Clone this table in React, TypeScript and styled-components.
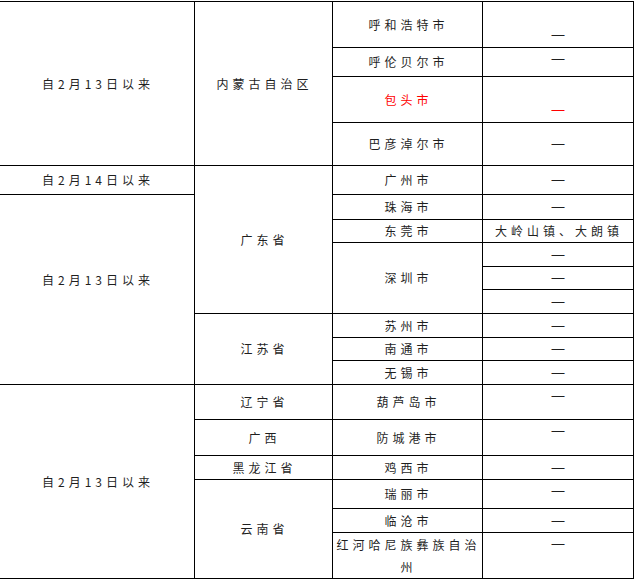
import React from 'react';
import styled, { createGlobalStyle } from 'styled-components';

const GlobalStyle = createGlobalStyle`
	html,
	body {
		margin: 0;
		padding: 0;
		background: #ffffff;
		overflow: hidden;
	}
`;

type CellData = {
	text?: string;
	dash?: boolean;
	lead?: boolean;
	rowSpan?: number;
	top?: boolean;
	red?: boolean;
	padBottom?: number;
};

type RowData = {
	height: number;
	cells: CellData[];
};

const columns = [195, 138, 150, 151];

const rows: RowData[] = [
	{
		height: 46,
		cells: [
			{ text: '自2月13日以来', rowSpan: 4 },
			{ text: '内蒙古自治区', rowSpan: 4 },
			{ text: '呼和浩特市' },
			{ dash: true, lead: true, top: true },
		],
	},
	{ height: 29, cells: [{ text: '呼伦贝尔市' }, { dash: true, top: true }] },
	{ height: 46, cells: [{ text: '包头市', red: true }, { dash: true, lead: true, top: true, red: true }] },
	{ height: 43, cells: [{ text: '巴彦淖尔市' }, { dash: true }] },
	{
		height: 29,
		cells: [{ text: '自2月14日以来' }, { text: '广东省', rowSpan: 6 }, { text: '广州市' }, { dash: true }],
	},
	{
		height: 25,
		cells: [{ text: '自2月13日以来', rowSpan: 8, padBottom: 20 }, { text: '珠海市' }, { dash: true }],
	},
	{ height: 23, cells: [{ text: '东莞市' }, { text: '大岭山镇、大朗镇' }] },
	{ height: 24, cells: [{ text: '深圳市', rowSpan: 3 }, { dash: true }] },
	{ height: 23, cells: [{ dash: true }] },
	{ height: 24, cells: [{ dash: true }] },
	{ height: 24, cells: [{ text: '江苏省', rowSpan: 3 }, { text: '苏州市' }, { dash: true }] },
	{ height: 23, cells: [{ text: '南通市' }, { dash: true }] },
	{ height: 24, cells: [{ text: '无锡市' }, { dash: true }] },
	{
		height: 35,
		cells: [
			{ text: '自2月13日以来', rowSpan: 6 },
			{ text: '辽宁省' },
			{ text: '葫芦岛市' },
			{ dash: true, top: true },
		],
	},
	{ height: 36, cells: [{ text: '广西' }, { text: '防城港市' }, { dash: true, top: true }] },
	{ height: 24, cells: [{ text: '黑龙江省' }, { text: '鸡西市' }, { dash: true }] },
	{
		height: 29,
		cells: [{ text: '云南省', rowSpan: 3 }, { text: '瑞丽市' }, { dash: true, top: true }],
	},
	{ height: 24, cells: [{ text: '临沧市' }, { dash: true }] },
	{ height: 46, cells: [{ text: '红河哈尼族彝族自治州' }, { dash: true, top: true }] },
];

const App = () => {
	return (
		<>
			<GlobalStyle />
			<Page>
				<Table>
					<colgroup>
						{columns.map((w, i) => (
							<Col key={i} $width={w} />
						))}
					</colgroup>
					<tbody>
						{rows.map((row, i) => (
							<Row key={i} $height={row.height}>
								{row.cells.map((cell, j) => (
									<Cell
										key={j}
										rowSpan={cell.rowSpan}
										$top={cell.top}
										$red={cell.red}
										$padBottom={cell.padBottom}
									>
										{cell.lead && <br />}
										{cell.dash ? <Dash>—</Dash> : cell.text}
									</Cell>
								))}
							</Row>
						))}
					</tbody>
				</Table>
			</Page>
		</>
	);
};

const Page = styled.div`
	width: 634px;
	height: 579px;
	overflow: hidden;
	background: #ffffff;
`;

const Table = styled.table`
	border-collapse: collapse;
	table-layout: fixed;
	width: 635px;
	margin: 1px 0 0 -1px;
	font-family: 'Noto Sans CJK SC', 'Noto Sans', sans-serif;
	font-size: 12px;
	color: #1f1f1f;
`;

const Col = styled.col<{ $width: number }>`
	width: ${(p) => p.$width}px;
`;

const Row = styled.tr<{ $height: number }>`
	height: ${(p) => p.$height}px;
`;

const Cell = styled.td<{ $top?: boolean; $red?: boolean; $padBottom?: number }>`
	border: 1px solid #000000;
	padding: 0 1px ${(p) => p.$padBottom || 0}px 3px;
	text-align: center;
	vertical-align: ${(p) => (p.$top ? 'top' : 'middle')};
	line-height: 22px;
	letter-spacing: 4px;
	color: ${(p) => (p.$red ? '#ff0000' : 'inherit')};
`;

const Dash = styled.span`
	display: inline-block;
	height: 22px;
	line-height: 22px;
	vertical-align: top;
	margin-left: -2px;
	font-family: 'Liberation Sans', sans-serif;
	font-size: 13px;
	letter-spacing: 0;
`;

export default App;
